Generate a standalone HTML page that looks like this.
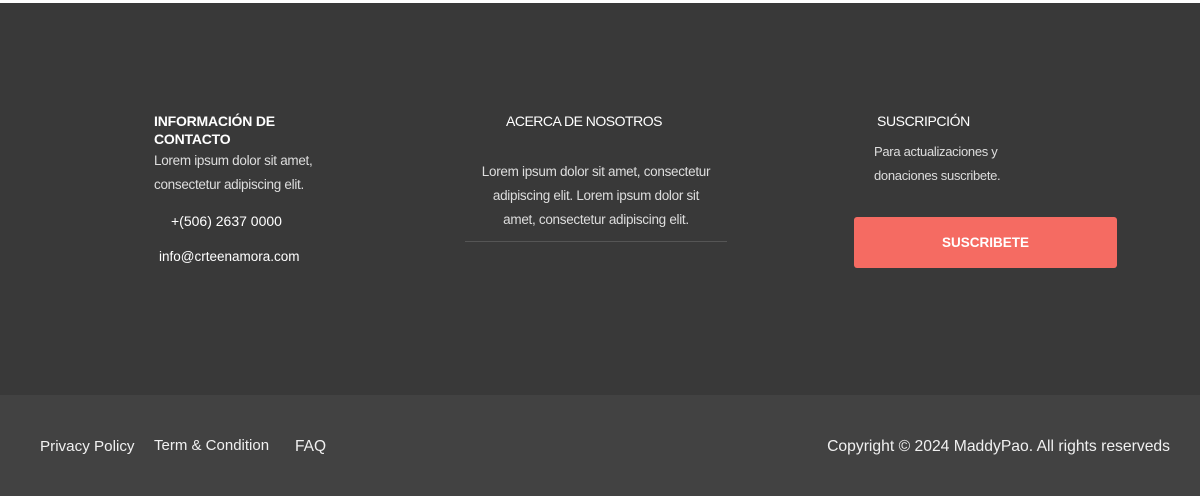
<!DOCTYPE html>
<html><head><style>
*{margin:0;padding:0;box-sizing:border-box}
body{width:1200px;height:496px;background:#fff;font-family:"Liberation Sans",sans-serif;position:relative;overflow:hidden}
.top{position:absolute;top:3px;left:0;width:1200px;height:392px;background:#393939}
.bot{position:absolute;top:395px;left:0;width:1200px;height:101px;background:#424242}
.a{position:absolute;white-space:nowrap}
h4{position:absolute;color:#fff;font-size:14px;font-weight:bold;line-height:18px;letter-spacing:-0.2px}
.p{color:#ddd;font-size:13.5px;line-height:24px;letter-spacing:-0.3px}
.btn{position:absolute;left:854px;top:217px;width:263px;height:51px;background:#f56b62;border-radius:3px;color:#fff;font-weight:bold;font-size:13.5px;text-align:center;line-height:51px}
.f{color:#f0f0f0;font-size:15.5px;position:absolute;top:438px;white-space:nowrap}
</style></head><body>
<div class="top"></div><div class="bot"></div>
<h4 style="left:154px;top:112px">INFORMACIÓN DE<br>CONTACTO</h4>
<div class="a p" style="left:154px;top:149px">Lorem ipsum dolor sit amet,<br>consectetur adipiscing elit.</div>
<div class="a" style="left:171px;top:213px;color:#fff;font-size:14px">+(506) 2637 0000</div>
<div class="a" style="left:159px;top:249px;color:#fff;font-size:13.5px">info@crteenamora.com</div>
<h4 style="left:506px;top:112px;font-weight:normal;font-size:14px;letter-spacing:-0.5px">ACERCA DE NOSOTROS</h4>
<div class="a p" style="left:465px;top:160px;width:262px;text-align:center">Lorem ipsum dolor sit amet, consectetur<br>adipiscing elit. Lorem ipsum dolor sit<br>amet, consectetur adipiscing elit.</div>
<div class="a" style="left:465px;top:241px;width:262px;height:1px;background:#555"></div>
<h4 style="left:877px;top:112px;font-weight:normal;font-size:14px;letter-spacing:-0.4px">SUSCRIPCIÓN</h4>
<div class="a p" style="left:874px;top:140px;font-size:13px">Para actualizaciones y<br>donaciones suscribete.</div>
<div class="btn">SUSCRIBETE</div>
<div class="f" style="left:40px;font-size:15.2px">Privacy Policy</div>
<div class="f" style="left:154px;top:437px;font-size:15px">Term &amp; Condition</div>
<div class="f" style="left:295px">FAQ</div>
<div class="f" style="right:30px;font-size:15.7px">Copyright © 2024 MaddyPao. All rights reserveds</div>
</body></html>
